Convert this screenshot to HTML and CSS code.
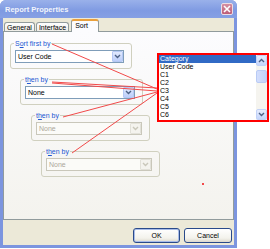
FILE: index.html
```html
<!DOCTYPE html>
<html lang="en">
<head>
    <meta charset="UTF-8">
    <title>Report Properties</title>
    <link rel="stylesheet" href="styles.css">
</head>
<body>

<div class="screen">

    <!-- Dialog window -->
    <div class="window">
        <div class="titlebar">
            <span class="title">Report Properties</span>
            <span class="close">
                <svg width="8" height="8" viewBox="0 0 8 8"><path d="M1 1L7 7M7 1L1 7" stroke="#fff" stroke-width="1.6"/></svg>
            </span>
        </div>

        <div class="body">
            <div class="tabs">
                <div class="tab">General</div>
                <div class="tab">Interface</div>
                <div class="tab active">Sort</div>
            </div>

            <div class="panel">
                <fieldset class="group">
                    <legend>S<u>o</u>rt first by</legend>
                    <div class="combo">
                        <span class="combo-text">User Code</span>
                        <span class="drop"><svg width="7" height="5" viewBox="0 0 7 5"><path d="M1 1L3.5 3.5L6 1" stroke="#4d6185" stroke-width="1.4" fill="none"/></svg></span>
                    </div>
                </fieldset>

                <fieldset class="group level-1">
                    <legend>t<u>h</u>en by</legend>
                    <div class="combo">
                        <span class="combo-text">None</span>
                        <span class="drop"><svg width="7" height="5" viewBox="0 0 7 5"><path d="M1 1L3.5 3.5L6 1" stroke="#4d6185" stroke-width="1.4" fill="none"/></svg></span>
                    </div>
                </fieldset>

                <fieldset class="group level-2">
                    <legend>t<u>h</u>en by</legend>
                    <div class="combo disabled">
                        <span class="combo-text">None</span>
                        <span class="drop"><svg width="7" height="5" viewBox="0 0 7 5"><path d="M1 1L3.5 3.5L6 1" stroke="#c9c7ba" stroke-width="1.4" fill="none"/></svg></span>
                    </div>
                </fieldset>

                <fieldset class="group level-3">
                    <legend>t<u>h</u>en by</legend>
                    <div class="combo disabled">
                        <span class="combo-text">None</span>
                        <span class="drop"><svg width="7" height="5" viewBox="0 0 7 5"><path d="M1 1L3.5 3.5L6 1" stroke="#c9c7ba" stroke-width="1.4" fill="none"/></svg></span>
                    </div>
                </fieldset>
            </div>

            <div class="buttons">
                <button class="btn default">OK</button>
                <button class="btn">Cancel</button>
            </div>
        </div>
    </div>

    <!-- Field list callout -->
    <div class="listbox">
        <ul class="items">
            <li class="selected">Category</li>
            <li>User Code</li>
            <li>C1</li>
            <li>C2</li>
            <li>C3</li>
            <li>C4</li>
            <li>C5</li>
            <li>C6</li>
        </ul>
        <div class="scrollbar">
            <span class="sb-btn"><svg width="7" height="5" viewBox="0 0 7 5"><path d="M1 4L3.5 1.5L6 4" stroke="#4d6185" stroke-width="1.4" fill="none"/></svg></span>
            <div class="sb-track"><span class="sb-thumb"></span></div>
            <span class="sb-btn"><svg width="7" height="5" viewBox="0 0 7 5"><path d="M1 1L3.5 3.5L6 1" stroke="#4d6185" stroke-width="1.4" fill="none"/></svg></span>
        </div>
    </div>

    <!-- Pointer lines -->
    <svg class="lines" width="270" height="249" viewBox="0 0 270 249">
        <g stroke="#f24a4a" stroke-width="1">
            <line x1="52" y1="44" x2="157" y2="89"/>
            <line x1="52" y1="82" x2="157" y2="88"/>
            <line x1="52" y1="83" x2="157" y2="91"/>
            <line x1="63" y1="117" x2="157" y2="92"/>
            <line x1="72" y1="153" x2="157" y2="93"/>
        </g>
        <rect x="202" y="183" width="2" height="2" fill="#f24a4a"/>
    </svg>

</div>

</body>
</html>
```

FILE: styles.css
```css
body {
    margin: 0;
    background-color: #fff;
    font-family: "Liberation Sans", Arial, sans-serif;
    font-size: 7px;
}

.screen {
    position: relative;
    width: 270px;
    height: 249px;
}

/* Window frame */
.window {
    width: 237px;
    height: 248px;
    box-sizing: border-box;
    padding: 0 3px 3px;
    background-color: #7c95df;
    border-radius: 6px 6px 0 0;
    display: flex;
    flex-direction: column;
}

.titlebar {
    height: 18px;
    display: flex;
    align-items: center;
    justify-content: space-between;
    padding: 0 1px 0 2px;
    background: linear-gradient(#9ab1ea, #7f9ae2 60%, #86a0e4);
    margin: 0 -3px;
    padding: 0 4px 0 5px;
    border-radius: 6px 6px 0 0;
}

.title {
    color: #f2f5fc;
    font-weight: bold;
    font-size: 7.5px;
}

.close {
    width: 12px;
    height: 12px;
    box-sizing: border-box;
    border: 1px solid #eedde3;
    border-radius: 2px;
    background: linear-gradient(#d58fa2, #bd5d77);
    display: flex;
    align-items: center;
    justify-content: center;
}

.body {
    flex: 1;
    background-color: #ece9d8;
    display: flex;
    flex-direction: column;
    padding-top: 2px;
}

/* Tabs */
.tabs {
    display: flex;
    align-items: flex-end;
    height: 12px;
    margin-left: 1px;
    margin-bottom: -1px;
}

.tab {
    height: 10px;
    box-sizing: border-box;
    line-height: 9px;
    padding: 0 2px;
    border: 1px solid #919b9c;
    border-bottom: none;
    border-radius: 3px 3px 0 0;
    background: linear-gradient(#fefefe, #ecebe5);
    margin-right: 1px;
}

.tab.active {
    position: relative;
    z-index: 1;
    height: 13px;
    line-height: 10px;
    padding: 0 10px 0 3px;
    margin-left: 1px;
    border-top: 2px solid #e9a03c;
    background: #fcfcfe;
}

.panel {
    height: 189px;
    box-sizing: border-box;
    border: 1px solid #919b9c;
    background: linear-gradient(#fcfcfe, #f4f3ee);
    padding: 7px 6px;
    display: flex;
    flex-direction: column;
    gap: 6px;
}

/* Group boxes */
.group {
    width: 122px;
    box-sizing: border-box;
    margin: 0;
    padding: 2px 7px 5px 4px;
    border: 1px solid #d0d0bf;
    border-radius: 3px;
}

.group legend {
    padding: 0 1px;
    margin-left: -1px;
    line-height: 9px;
    color: #2257d3;
}

.level-1 { margin-left: 10px; width: 123px; }
.level-2 { margin-left: 21px; width: 119px; }
.level-3 { margin-left: 31px; width: 119px; }

.combo {
    display: flex;
    height: 13px;
    box-sizing: border-box;
    border: 1px solid #7f9db9;
    background-color: #fff;
}

.combo-text {
    flex: 1;
    padding-left: 2px;
    line-height: 11px;
    color: #000;
}

.drop {
    width: 11px;
    box-sizing: border-box;
    border: 1px solid #b5c8f4;
    border-radius: 1px;
    background: linear-gradient(#e1e9fd, #bccefa);
    display: flex;
    align-items: center;
    justify-content: center;
}

.combo.disabled {
    border-color: #c9c7ba;
    background-color: #fbfbf8;
}

.combo.disabled .combo-text { color: #aca899; }

.combo.disabled .drop {
    border-color: #e2e1d9;
    background: #f4f3ee;
}

/* Dialog buttons */
.buttons {
    flex: 1;
    display: flex;
    justify-content: flex-end;
    align-items: flex-start;
    gap: 4px;
    padding: 8px 2px 0 0;
}

.btn {
    height: 15px;
    width: 48px;
    padding: 0;
    font-family: inherit;
    font-size: 7px;
    color: #000;
    border: 1px solid #2a4a8a;
    border-radius: 3px;
    background: linear-gradient(#ffffff, #f3f2ec 70%, #dcd8cc);
}

.btn.default {
    width: 47px;
    box-shadow: inset 0 0 0 1px #a8bce8;
}

/* Field list callout */
.listbox {
    position: absolute;
    left: 157px;
    top: 53px;
    width: 112px;
    height: 69px;
    box-sizing: border-box;
    border: 2px solid #ff0000;
    background-color: #fff;
    display: flex;
}

.items {
    flex: 1;
    list-style: none;
    margin: 0;
    padding: 0;
}

.items li {
    height: 8px;
    line-height: 8px;
    padding-left: 1px;
}

.items li.selected {
    background-color: #316ac5;
    color: #fff;
}

.scrollbar {
    width: 11px;
    display: flex;
    flex-direction: column;
    background-color: #f5f4ef;
}

.sb-btn {
    height: 11px;
    box-sizing: border-box;
    border: 1px solid #c2d2f7;
    border-radius: 2px;
    background: linear-gradient(#e6edfd, #c5d5fc);
    display: flex;
    align-items: center;
    justify-content: center;
}

.sb-track {
    flex: 1;
    padding-top: 4px;
}

.sb-thumb {
    display: block;
    height: 13px;
    box-sizing: border-box;
    border: 1px solid #b9cbf5;
    border-radius: 2px;
    background: linear-gradient(90deg, #d3defc, #c2d2fb);
}

.lines {
    position: absolute;
    left: 0;
    top: 0;
    pointer-events: none;
}
```
